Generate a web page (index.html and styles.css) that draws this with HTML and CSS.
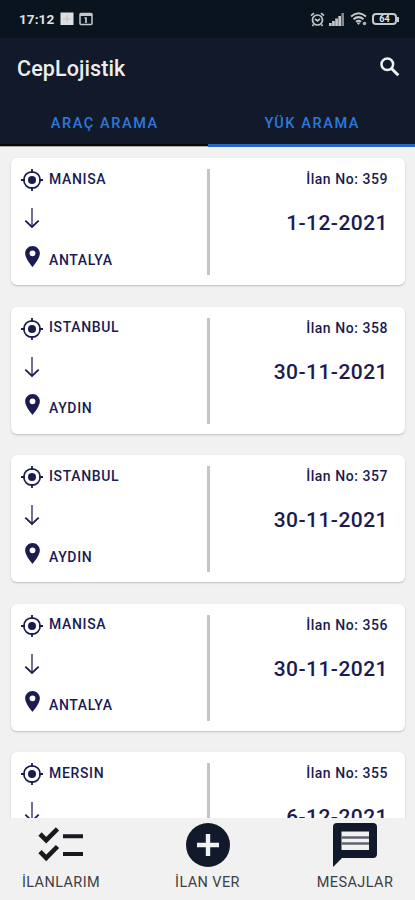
FILE: index.html
```html
<!DOCTYPE html>
<html lang="tr">
<head>
<meta charset="utf-8">
<title>CepLojistik</title>
<link rel="stylesheet" href="styles.css">
</head>
<body>
<svg width="0" height="0" class="defs">
  <symbol id="target" viewBox="0 0 22 22"><circle cx="11" cy="11" r="8.2" fill="none" stroke="currentColor" stroke-width="1.7"/><circle cx="11" cy="11" r="4" fill="currentColor"/><path d="M11 0v4M11 18v4M0 11h4M18 11h4" stroke="currentColor" stroke-width="1.8"/></symbol>
  <symbol id="arrow" viewBox="0 0 16 22"><path d="M8 1v19" stroke="currentColor" stroke-width="1.8" fill="none" opacity=".7"/><path d="M1.300 13.700 8 20l6.700-6.300" fill="none" stroke="currentColor" stroke-width="1.800"/></symbol>
  <symbol id="pin" viewBox="5 2 14 20"><path d="M12 2C8.130 2 5 5.130 5 9c0 5.250 7 13 7 13s7-7.750 7-13c0-3.870-3.130-7-7-7zm0 9.800a2.800 2.800 0 1 1 0-5.600 2.800 2.800 0 0 1 0 5.600z" fill="currentColor"/></symbol>
</svg>
<div class="screen">
  <div class="status">
    <span class="clock">17:12</span>
    <svg class="s-app" width="14" height="14" viewBox="0 0 14 14"><rect x=".5" y=".5" width="13" height="12.500" fill="#dedfe0"/><path d="M7 3v7M3 7h8" stroke="#bfc1c3"/></svg>
    <svg class="s-box" width="14" height="14" viewBox="0 0 14 14"><rect x="1" y="1.500" width="12" height="11" rx="1" fill="none" stroke="#c5c8ca" stroke-width="1.500"/><path d="M1 3h12" stroke="#c5c8ca" stroke-width="2"/><path d="M5.500 6H7v5" fill="none" stroke="#c5c8ca" stroke-width="1.700"/></svg>
    <span class="grow"></span>
    <svg width="15" height="15" viewBox="0 0 15 15" fill="none" stroke="#c5c8ca" stroke-width="1.700"><circle cx="7.500" cy="8" r="5"/><path d="M1 3.600 4 1.200M14 3.600 11 1.200M3.500 12.500 2.500 14M11.500 12.500l1 1.500M5 7l2.500 2L10 6.800"/></svg>
    <svg class="s-sig" width="16" height="13" viewBox="0 0 16 13" fill="#c5c8ca"><path d="M0 10h2.700v3H0zM3.100 8h2.700v5H3.100zM6.200 5.500h2.700V13H6.200zM9.300 3H12v10H9.300z"/><path d="M12.400 0h2.600v13h-2.600z" opacity=".65"/></svg>
    <svg class="s-wifi" width="17" height="14" viewBox="0 0 17 14"><path d="M1 4.500Q8.500-2 16 4.500M3.500 7.200Q8.500 3 13.500 7.200M6 9.800q2.500-2 5 0" fill="none" stroke="#c5c8ca" stroke-width="2"/><path d="m8.500 13-2-2.500h4z" fill="#c5c8ca"/><circle cx="14.500" cy="11.500" r="1.800" fill="#aeb1b4"/></svg>
    <span class="battery">64</span><span class="nub"></span>
  </div>
  <div class="appbar">
    <h1>CepLojistik</h1>
    <svg width="20" height="20" viewBox="0 0 20 20" fill="none" stroke="#f0f0f1"><circle cx="7.300" cy="7.300" r="5.800" stroke-width="2.500"/><path d="m11.500 11.500 6.800 6.800" stroke-width="3"/></svg>
  </div>
  <div class="tabs"><div class="tab">ARAÇ ARAMA</div><div class="tab active">YÜK ARAMA</div></div>
  <div class="list">
    <div class="card"><div class="route"><svg class="target"><use href="#target"/></svg><span class="from">MANISA</span><svg class="arrow"><use href="#arrow"/></svg><svg class="pin"><use href="#pin"/></svg><span class="to">ANTALYA</span></div><div class="info"><div class="no">İlan No: 359</div><div class="date">1-12-2021</div></div></div>
    <div class="card"><div class="route"><svg class="target"><use href="#target"/></svg><span class="from">ISTANBUL</span><svg class="arrow"><use href="#arrow"/></svg><svg class="pin"><use href="#pin"/></svg><span class="to">AYDIN</span></div><div class="info"><div class="no">İlan No: 358</div><div class="date">30-11-2021</div></div></div>
    <div class="card"><div class="route"><svg class="target"><use href="#target"/></svg><span class="from">ISTANBUL</span><svg class="arrow"><use href="#arrow"/></svg><svg class="pin"><use href="#pin"/></svg><span class="to">AYDIN</span></div><div class="info"><div class="no">İlan No: 357</div><div class="date">30-11-2021</div></div></div>
    <div class="card"><div class="route"><svg class="target"><use href="#target"/></svg><span class="from">MANISA</span><svg class="arrow"><use href="#arrow"/></svg><svg class="pin"><use href="#pin"/></svg><span class="to">ANTALYA</span></div><div class="info"><div class="no">İlan No: 356</div><div class="date">30-11-2021</div></div></div>
    <div class="card"><div class="route"><svg class="target"><use href="#target"/></svg><span class="from">MERSIN</span><svg class="arrow"><use href="#arrow"/></svg></div><div class="info"><div class="no">İlan No: 355</div><div class="date">6-12-2021</div></div></div>
  </div>
  <div class="nav">
    <div class="item"><svg width="46" height="46" viewBox="0 0 46 46" fill="none" stroke="#17191f" stroke-width="4.600"><path d="m2 12 6.200 6.200L19.500 6.800M2 29.700l6.200 6.200L19.500 24.500"/><path d="M25 14.300h20M25 32h20" stroke-width="4"/></svg><span>İLANLARIM</span></div>
    <div class="item mid"><svg width="46" height="46" viewBox="0 0 46 46"><circle cx="23" cy="23" r="22" fill="#12192b"/><path d="M23 12v22M12 23h22" stroke="#f1f1f1" stroke-width="4.400"/></svg><span>İLAN VER</span></div>
    <div class="item last"><svg width="46" height="46" viewBox="0 0 46 46"><path d="M5 1h36a4 4 0 0 1 4 4v27a4 4 0 0 1-4 4H10L1 45V5a4 4 0 0 1 4-4z" fill="#12192b"/><path d="M9.500 9.500h27.500v18.500H9.500z" fill="#f1f1f1"/><path d="M9.500 15.500h27.500M9.500 21.500h27.500" stroke="#60636c" stroke-width="2.600"/></svg><span>MESAJLAR</span></div>
  </div>
</div>
</body>
</html>
```
FILE: styles.css
```css
* { box-sizing: border-box; }
body { margin: 0; font-family: Roboto, sans-serif; }
.defs { position: absolute; }
.screen { width: 415px; height: 900px; display: flex; flex-direction: column; overflow: hidden; background: #f1f1f1; }
svg { flex: none; display: block; }

.status { height: 38px; flex: none; background: #0a141f; display: flex; align-items: center; padding: 0 16px 0 19px; color: #dfe1e3; }
.clock { font-size: 13.5px; font-weight: 700; letter-spacing: .1px; width: 41px; line-height: 20px; }
.s-box { margin-left: 5px; }
.grow { flex: 1; }
.s-sig { margin-left: 4px; }
.s-wifi { margin: 0 5px; }
.battery { width: 25px; height: 12px; border: 2px solid #c5c8ca; border-radius: 4px; font-size: 9px; line-height: 8px; font-weight: 700; text-align: center; color: #e5e6e7; }
.nub { width: 2px; height: 5px; background: #c5c8ca; }

.appbar { height: 60px; flex: none; background: #12192a; display: flex; align-items: center; justify-content: space-between; padding: 0 15px 0 17px; }
h1 { margin: 1px 0 0; font-size: 21.5px; line-height: 26px; font-weight: 500; color: #ecedee; letter-spacing: .1px; }
.appbar svg { margin-bottom: 3px; }
.tabs { height: 49px; flex: none; display: grid; grid-template-columns: 1fr 1fr; background: #12192a; }
.tab { height: 49px; padding: 2px 0 0 2px; text-align: center; font-size: 14.5px; line-height: 48px; font-weight: 500; letter-spacing: 1.6px; color: #2c79dc; box-shadow: inset 0 -1px #aaa, inset 0 -3px #05070b; }
.tab.active { box-shadow: inset 0 -3px #2466bd; }

.list { flex: 1; min-height: 0; overflow: hidden; padding: 11px 10px 0 11px; display: flex; flex-direction: column; gap: 21.5px; }
.card { flex: none; height: 127px; border-radius: 6px; background: #fff; box-shadow: 0 1px 2px rgba(0,0,0,.22); display: grid; grid-template-columns: 199px 1fr; padding: 11px 0 10px; color: #1b1b52; }
.route { border-right: 3px solid #c5c5c5; display: grid; grid-template-columns: 22px 1fr; grid-template-rows: 22px 54px 24px; column-gap: 6px; padding-left: 10px; align-items: center; justify-items: center; }
.target { width: 22px; height: 22px; }
.arrow { grid-column: 1; width: 16px; height: 22px; }
.pin { grid-column: 1; grid-row: 3; width: 15px; height: 21px; margin-bottom: 2px; }
.from, .to { justify-self: start; font-size: 14px; line-height: 20px; font-weight: 500; letter-spacing: .65px; }
.from { margin-top: -3px; }
.to { margin-top: 5px; grid-column: 2; grid-row: 3; }
.info { text-align: right; padding: 0 17px 0 0; font-weight: 500; }
.no { font-size: 14px; line-height: 20px; letter-spacing: .55px; }
.date { margin-top: 20px; font-size: 21px; line-height: 28px; letter-spacing: .45px; }

.nav { height: 82px; flex: none; background: #f1f1f1; display: grid; grid-template-columns: 122px 1fr 122px; padding-top: 4px; }
.item { display: flex; flex-direction: column; align-items: center; color: #3c3f45; font-size: 14.500px; line-height: 20px; letter-spacing: .4px; font-weight: 400; }
.item span { margin-top: 5px; }
.last { padding-left: 2px; }
```
